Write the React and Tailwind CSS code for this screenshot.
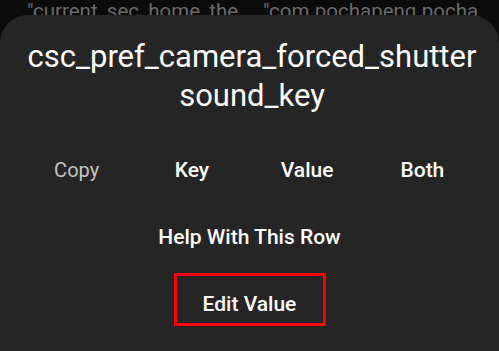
import React from 'react';

const copyOptions = ['Key', 'Value', 'Both'];

const App = () => {
  return (
    <div className="relative w-[499px] h-[351px] overflow-hidden bg-[#0b0b0b] font-['Roboto',sans-serif]">
      {/* list rows peeking out behind the sheet */}
      <div className="absolute top-[-5px] left-[27px] right-0 flex text-[20.5px] leading-[32px] text-[#6a6a6a] whitespace-nowrap">
        <span className="w-[236px]">"current_sec_home_the</span>
        <span>"com.pochapeng.pocha</span>
      </div>

      <div className="absolute top-[15px] left-0 right-0 bottom-0 rounded-t-[28px] bg-[#252525] flex flex-col items-center">
        <h1 className="mt-[22px] pl-[5px] text-center text-[31px] leading-[39px] text-white whitespace-nowrap">
          csc_pref_camera_forced_shutter
          <br />
          sound_key
        </h1>

        <div className="mt-[42px] w-full px-[19px] grid grid-cols-4 text-[20px] leading-[26px] text-center">
          <span className="text-[#c4c4c4]">Copy</span>
          {copyOptions.map(opt => (
            <span key={opt} className="text-white text-[21px] font-medium">{opt}</span>
          ))}
        </div>

        <button className="mt-[41px] text-[21px] leading-[26px] text-white font-medium">
          Help With This Row
        </button>

        <button className="mt-[23px] w-[152px] h-[53px] pt-[8px] border-[3px] border-[#ff0000] text-[21px] leading-[26px] text-white font-medium">
          Edit Value
        </button>
      </div>
    </div>
  );
};

export default App;
